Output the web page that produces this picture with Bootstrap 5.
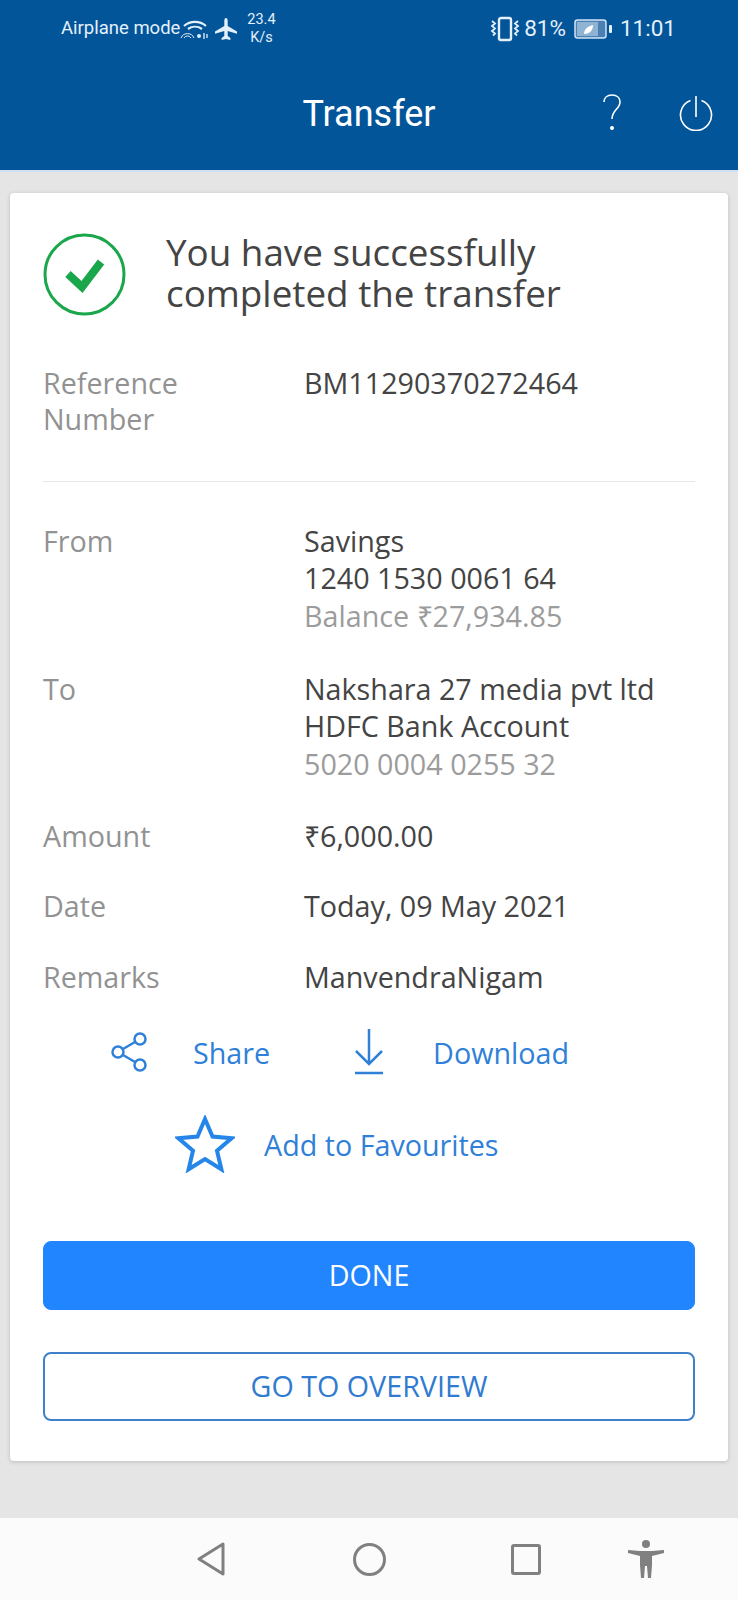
<!DOCTYPE html>
<html lang="en">
<head>
  <meta charset="UTF-8">
  <title>Transfer</title>
  <meta name="viewport" content="width=device-width, initial-scale=1">
  <link href="https://cdn.jsdelivr.net/npm/bootstrap@5.3.3/dist/css/bootstrap.min.css" rel="stylesheet">
  <style>
    body {
      width: 738px;
      height: 1600px;
      overflow: hidden;
      background-color: #e5e5e5;
      font-family: "Open Sans", sans-serif;
      color: #444;
    }
    .app-header {
      height: 172px;
      background-color: #03559a;
      border-bottom: 2px solid #cfe0ee;
      color: #fff;
      font-family: Roboto, sans-serif;
    }
    .status-bar {
      height: 58px;
      padding: 0 62px 0 61px;
      font-size: 18.5px;
      color: #e4f0fa;
    }
    .net-speed {
      width: 42px;
      font-size: 14.5px;
      line-height: 18px;
      margin-left: 2px;
    }
    .batt-text { font-size: 22.5px; }
    .title-bar {
      display: grid;
      grid-template-columns: 1fr auto 1fr;
      height: 112px;
    }
    .title-bar h1 {
      font-size: 36px;
      font-weight: 400;
      margin: 2px 0 0;
    }
    .title-tools { margin-bottom: 2px; }
    .power-ico { margin-left: 55px; margin-right: 25px; }
    .success-card {
      margin: 21px 10px 0;
      height: 1268px;
      padding: 39px 33px 0 33px;
      border: 0;
      border-radius: 4px;
      box-shadow: 0 1px 4px rgba(0, 0, 0, .18);
    }
    .success-head {
      font-size: 36.8px;
      line-height: 41px;
      gap: 40px;
    }
    .success-text { padding-bottom: 2px; }
    .ref-row { margin-top: 49px; line-height: 36px; }
    .info-row {
      font-size: 28.7px;
      line-height: 37.5px;
      margin-bottom: 33px;
    }
    .info-row.ref-row { line-height: 36px; }
    .info-row.from-row { margin-bottom: 35.5px; }
    .info-row.to-row { margin-bottom: 34.5px; }
    .info-label {
      width: 261px;
      padding-right: 70px;
      flex-shrink: 0;
      color: #929292;
    }
    .muted-line { color: #9c9c9c; }
    .head-rule {
      margin: 10.5px 0 40px;
      border-top: 1px solid #e6e6e6;
    }
    .action-link {
      font-size: 28.7px;
      line-height: 37px;
      color: #2f80d8;
      text-decoration: none;
    }
    .share-row { height: 48px; }
    .fav-row { height: 60px; margin-top: 38px; }
    .share-lnk { margin-left: 67px; }
    .share-lnk span { margin-left: 45px; }
    .dl-lnk { margin-left: 84px; }
    .dl-lnk span { margin-left: 49px; }
    .fav-lnk { margin-left: 132px; }
    .fav-lnk span { margin-left: 29px; }
    .action-btns { margin-top: 67px; gap: 41.5px; }
    .btn-done, .btn-overview {
      font-size: 28.7px;
      height: 69px;
      border-radius: 8px;
      line-height: 1;
    }
    .btn-done {
      background-color: #2185ff;
      border-color: #2185ff;
      color: #fff;
    }
    .btn-overview {
      background: #fff;
      border: 2px solid #3f80c8;
      color: #2f7bd0;
    }
    .nav-bottom {
      height: 82px;
      margin-top: 57px;
      padding-left: 197px;
      background-color: #fbfbfb;
    }
    .nav-ico-b { margin-left: 128px; }
    .nav-ico-c { margin-left: 125px; }
    .nav-ico-d { margin-left: 87px; }
  </style>
</head>
<body>
  <header class="app-header">
    <div class="status-bar d-flex align-items-center">
      <span>Airplane mode</span>
      <svg width="30" height="26" viewBox="0 0 30 26" fill="none" stroke="#e4f0fa" class="flex-shrink-0">
        <path d="M4 10a17 17 0 0 1 22 0M8 13a12 12 0 0 1 14 0" stroke-width="2.2"/>
        <path d="M1 22a7 7 0 0 1 13 0M4 22a4 4 0 0 1 7 0" stroke-width="1"/>
        <circle cx="19" cy="20" r="2" fill="#e4f0fa" stroke="none"/>
        <path d="M24 17v6M27 18v4" stroke-width="1.3"/>
      </svg>
      <svg width="24" height="24" viewBox="0 0 24 24" fill="#e4f0fa" class="ms-1 flex-shrink-0">
        <path d="M12 1c1.100 0 1.700 1.300 1.700 3v5l9.300 5.400v2.300l-9.300-2.700v5l2.700 2v2L12 22l-4.400 1v-2l2.700-2v-5L1 16.700v-2.300L10.300 9V4c0-1.700.6-3 1.700-3z"/>
      </svg>
      <div class="net-speed text-center">23.4<br>K/s</div>
      <svg width="30" height="26" viewBox="0 0 30 26" fill="none" stroke="#e4f0fa" class="ms-auto flex-shrink-0">
        <rect x="9" y="2" width="12" height="22" rx="2" stroke-width="2.400"/>
        <path d="M2 5l3 2.500-3 2.500 3 2.500-3 2.500 3 2.500-2 2M28 5l-3 2.500 3 2.500-3 2.500 3 2.500-3 2.500 2 2" stroke-width="1.800"/>
      </svg>
      <span class="batt-text ms-1">81%</span>
      <svg width="38" height="22" viewBox="0 0 38 22" class="ms-2 flex-shrink-0">
        <rect x="1" y="2" width="31" height="18" rx="2.500" fill="#4c80b4" stroke="#cfe3f5" stroke-width="1.500"/>
        <rect x="3" y="4" width="21" height="14" fill="#8fb3d3"/>
        <rect x="35" y="7" width="3" height="8" rx="1" fill="#e4f0fa"/>
        <path d="M10 16c0-5 4-8 9-9 0 5-3 9-9 9z" fill="#fff"/>
      </svg>
      <span class="batt-text ms-2">11:01</span>
    </div>
    <div class="title-bar align-items-center">
      <div></div>
      <h1>Transfer</h1>
      <div class="title-tools d-flex justify-content-end align-items-center">
        <svg width="24" height="40" viewBox="0 0 24 40" fill="none" stroke="#fff" stroke-width="1.600">
          <path d="M4 9c0-4 3-7 8-7s8 3 8 7c0 7-8 8-8 17"/>
          <circle cx="12" cy="35" r="2" fill="#fff" stroke="none"/>
        </svg>
        <svg width="34" height="35" viewBox="0 0 34 35" fill="none" stroke="#fff" stroke-width="1.600" class="power-ico">
          <path d="M11.500 4.500a15.500 15.500 0 1 0 11 0M17 0v21"/>
        </svg>
      </div>
    </div>
  </header>

  <main class="card success-card">
    <div class="success-head d-flex align-items-center">
      <svg width="83" height="83" viewBox="0 0 83 83" fill="none" class="flex-shrink-0">
        <circle cx="41.500" cy="41.500" r="39.500" stroke="#1aa64a" stroke-width="3"/>
        <path d="M25 41l14 13 19-25" stroke="#1aa64a" stroke-width="8"/>
      </svg>
      <div class="success-text">You have successfully<br>completed the transfer</div>
    </div>

    <div class="info-row ref-row d-flex">
      <div class="info-label">Reference Number</div>
      <div>BM11290370272464</div>
    </div>
    <div class="head-rule"></div>

    <div class="info-row from-row d-flex">
      <div class="info-label">From</div>
      <div>Savings<br>1240 1530 0061 64<br><span class="muted-line">Balance ₹27,934.85</span></div>
    </div>
    <div class="info-row to-row d-flex">
      <div class="info-label">To</div>
      <div>Nakshara 27 media pvt ltd<br>HDFC Bank Account<br><span class="muted-line">5020 0004 0255 32</span></div>
    </div>
    <div class="info-row d-flex">
      <div class="info-label">Amount</div>
      <div>₹6,000.00</div>
    </div>
    <div class="info-row d-flex">
      <div class="info-label">Date</div>
      <div>Today, 09 May 2021</div>
    </div>
    <div class="info-row d-flex">
      <div class="info-label">Remarks</div>
      <div>ManvendraNigam</div>
    </div>

    <div class="share-row d-flex align-items-center">
      <a href="#" class="action-link d-flex align-items-center share-lnk">
        <svg width="38" height="40" viewBox="0 0 38 40" fill="none" stroke="#2f80d8" stroke-width="2.500">
          <circle cx="30" cy="7" r="5.500"/><circle cx="8" cy="20" r="5.500"/><circle cx="30" cy="33" r="5.500"/>
          <path d="M13 17l12-7M13 23l12 7"/>
        </svg>
        <span>Share</span>
      </a>
      <a href="#" class="action-link d-flex align-items-center dl-lnk">
        <svg width="30" height="46" viewBox="0 0 30 46" fill="none" stroke="#2f80d8" stroke-width="2.500">
          <path d="M15 0v34M2 22l13 13 13-13M1 44h28"/>
        </svg>
        <span>Download</span>
      </a>
    </div>
    <div class="fav-row d-flex align-items-center">
      <a href="#" class="action-link d-flex align-items-center fav-lnk">
        <svg width="60" height="58" viewBox="0 0 60 58" fill="none" stroke="#2585e8" stroke-width="4">
          <path d="M30 4l7.500 17.500 19 1.800-14.500 12.500 4.400 18.500L30 44l-16.400 10.300 4.400-18.500L3.500 23.300l19-1.800z"/>
        </svg>
        <span>Add to Favourites</span>
      </a>
    </div>

    <div class="d-flex flex-column action-btns">
      <button type="button" class="btn btn-done w-100">DONE</button>
      <button type="button" class="btn btn-overview w-100">GO TO OVERVIEW</button>
    </div>
  </main>

  <nav class="nav-bottom d-flex align-items-center">
    <svg width="28" height="34" viewBox="0 0 28 34" fill="none" stroke="#808080" stroke-width="3" stroke-linejoin="round">
      <path d="M26 2L2 17l24 15z"/>
    </svg>
    <svg width="33" height="33" viewBox="0 0 33 33" fill="none" stroke="#808080" stroke-width="3" class="nav-ico-b">
      <circle cx="16.500" cy="16.500" r="15"/>
    </svg>
    <svg width="30" height="31" viewBox="0 0 30 31" fill="none" stroke="#808080" stroke-width="3" class="nav-ico-c">
      <rect x="1.500" y="1.500" width="27" height="28" rx="1.500"/>
    </svg>
    <svg width="36" height="39" viewBox="0 0 36 39" fill="#808080" class="nav-ico-d">
      <circle cx="18" cy="4" r="4"/>
      <path d="M0 10l12 1h12l12-1v3l-12 3v9l-1 13h-3l-1-12h-2l-1 12h-3l-1-13v-9L0 13z"/>
    </svg>
  </nav>
  <script src="https://cdn.jsdelivr.net/npm/bootstrap@5.3.3/dist/js/bootstrap.bundle.min.js"></script>
</body>
</html>
